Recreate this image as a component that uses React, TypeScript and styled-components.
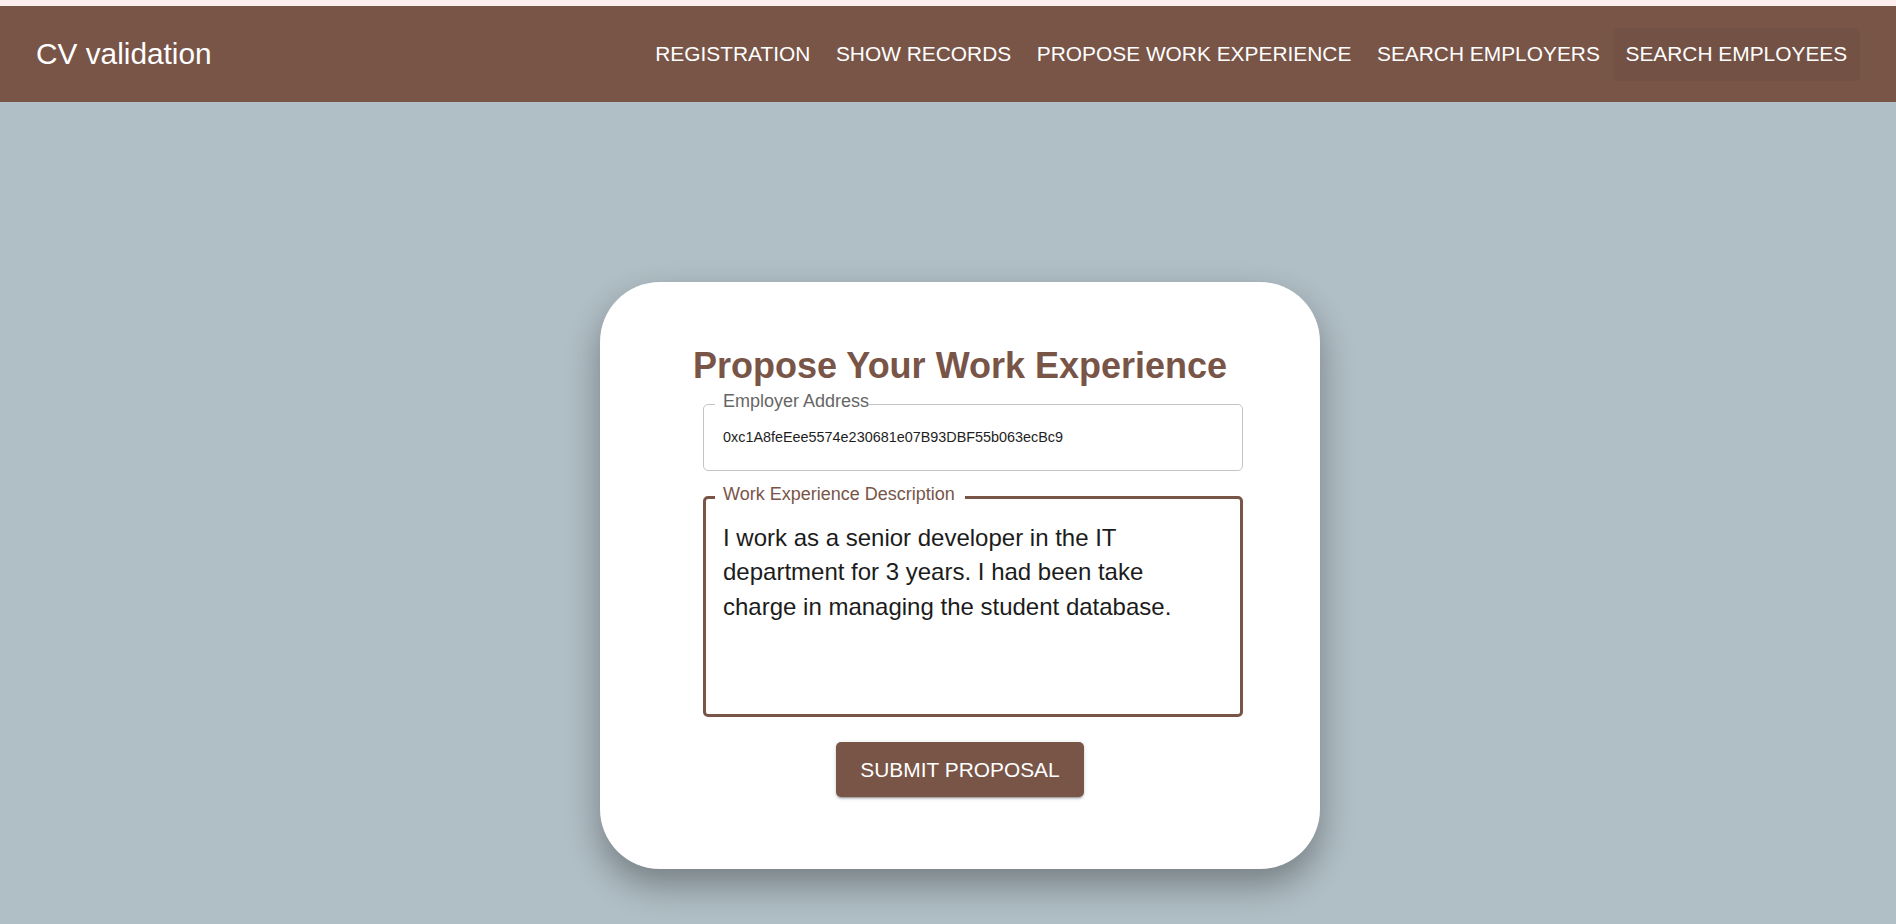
import React from "react";
import styled, { createGlobalStyle } from "styled-components";

const GlobalStyle = createGlobalStyle`
  html, body {
    margin: 0;
    padding: 0;
    background: #b0bec5;
    font-family: "Liberation Sans", Arial, sans-serif;
  }
  #root {
    min-height: 100vh;
  }
`;

const Page = styled.div`
  min-height: 100vh;
  background: #b0bec5;
`;

const TopStrip = styled.div`
  height: 6px;
  background: #fdeeee;
`;

const NavBar = styled.header`
  height: 96px;
  background: #795548;
  display: flex;
  align-items: center;
  padding: 0 36px 0 36px;
`;

const Brand = styled.div`
  font-size: 29.8px;
  color: #ffffff;
  line-height: 1;
`;

const NavLinks = styled.nav`
  display: flex;
  align-items: center;
  margin-left: auto;
`;

const NavButton = styled.button<{ $active?: boolean }>`
  height: 53px;
  padding: 0 12.8px;
  border: none;
  border-radius: 5px;
  background: ${(p) => (p.$active ? "rgba(0, 0, 0, 0.045)" : "transparent")};
  color: #ffffff;
  font-family: inherit;
  font-size: 20.9px;
  text-transform: uppercase;
  white-space: nowrap;
  cursor: pointer;
`;

const Main = styled.main`
  display: flex;
  justify-content: center;
  padding-top: 180px;
`;

const Card = styled.section`
  width: 720px;
  box-sizing: border-box;
  margin-left: 24px;
  background: #ffffff;
  border-radius: 60px;
  box-shadow: 0 16px 34px rgba(0, 0, 0, 0.33);
  padding: 63px 0 72px;
  display: flex;
  flex-direction: column;
  align-items: center;
`;

const Title = styled.h1`
  margin: 0;
  font-size: 36px;
  line-height: 41px;
  font-weight: 700;
  color: #795548;
`;

const Form = styled.div`
  width: 540px;
  margin-left: 26px;
  display: flex;
  flex-direction: column;
`;

const Field = styled.fieldset<{ $focused?: boolean; $gap: number }>`
  margin: ${(p) => p.$gap}px 0 0;
  min-width: 0;
  border: ${(p) => (p.$focused ? "3px solid #795548" : "1px solid #c4c4c4")};
  border-radius: 5px;
  padding: ${(p) => (p.$focused ? "0 9px 0" : "0 11px 12px")};
`;

const Legend = styled.legend<{ $focused?: boolean }>`
  font-size: 18px;
  line-height: 18px;
  padding: 0 ${(p) => (p.$focused ? "10px" : "0")} 6px 8px;
  color: ${(p) => (p.$focused ? "#795548" : "#666666")};
  white-space: nowrap;
`;

const AddressInput = styled.input`
  display: block;
  width: 100%;
  box-sizing: border-box;
  height: 42px;
  padding: 0 8px;
  border: none;
  outline: none;
  background: transparent;
  font-family: inherit;
  font-size: 14.4px;
  color: #1e1e1e;
`;

const DescriptionArea = styled.textarea`
  display: block;
  width: 100%;
  box-sizing: border-box;
  height: 205px;
  padding: 11.5px 14px 0 8px;
  border: none;
  outline: none;
  resize: none;
  overflow: hidden;
  background: transparent;
  font-family: inherit;
  font-size: 24px;
  line-height: 34.6px;
  color: #1c1c1c;
`;

const SubmitButton = styled.button`
  margin-top: 25px;
  height: 55px;
  padding: 0 24px;
  border: none;
  border-radius: 5px;
  background: #795548;
  color: #ffffff;
  font-family: inherit;
  font-size: 20.9px;
  text-transform: uppercase;
  cursor: pointer;
  box-shadow: 0px 3px 1px -2px rgba(0, 0, 0, 0.2),
    0px 2px 2px 0px rgba(0, 0, 0, 0.14), 0px 1px 5px 0px rgba(0, 0, 0, 0.12);
`;

const navItems = [
  "Registration",
  "Show Records",
  "Propose Work Experience",
  "Search Employers",
  "Search Employees",
];

export default function App() {
  return (
    <Page>
      <GlobalStyle />
      <TopStrip />
      <NavBar>
        <Brand>CV validation</Brand>
        <NavLinks>
          {navItems.map((item, i) => (
            <NavButton key={item} $active={i === navItems.length - 1}>
              {item}
            </NavButton>
          ))}
        </NavLinks>
      </NavBar>
      <Main>
        <Card>
          <Title>Propose Your Work Experience</Title>
          <Form>
            <Field $gap={6}>
              <Legend>Employer Address</Legend>
              <AddressInput
                defaultValue="0xc1A8feEee5574e230681e07B93DBF55b063ecBc9"
              />
            </Field>
            <Field $gap={14} $focused>
              <Legend $focused>Work Experience Description</Legend>
              <DescriptionArea defaultValue="I work as a senior developer in the IT department for 3 years. I had been take charge in managing the student database." />
            </Field>
          </Form>
          <SubmitButton>Submit Proposal</SubmitButton>
        </Card>
      </Main>
    </Page>
  );
}
